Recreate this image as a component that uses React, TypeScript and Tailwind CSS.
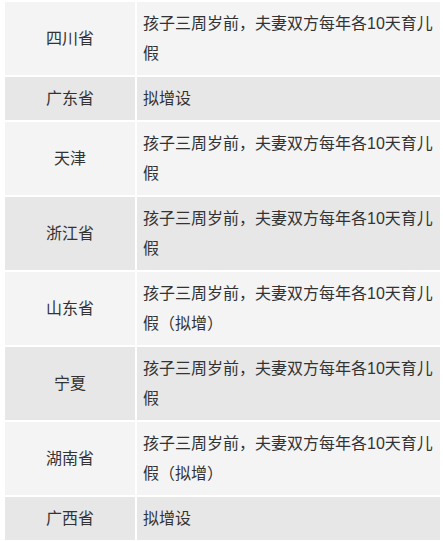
import React from "react";

const rows: { p: string; d: string }[] = [
  { p: "四川省", d: "孩子三周岁前，夫妻双方每年各10天育儿假" },
  { p: "广东省", d: "拟增设" },
  { p: "天津", d: "孩子三周岁前，夫妻双方每年各10天育儿假" },
  { p: "浙江省", d: "孩子三周岁前，夫妻双方每年各10天育儿假" },
  { p: "山东省", d: "孩子三周岁前，夫妻双方每年各10天育儿假（拟增）" },
  { p: "宁夏", d: "孩子三周岁前，夫妻双方每年各10天育儿假" },
  { p: "湖南省", d: "孩子三周岁前，夫妻双方每年各10天育儿假（拟增）" },
  { p: "广西省", d: "拟增设" },
];

export default function App() {
  return (
    <div
      className="w-[443px] h-[541px] overflow-hidden bg-white pl-[5px] pt-[2px] text-[16px] leading-[30px] text-[#333]"
      style={{ fontFamily: '"Liberation Sans", "Noto Sans CJK SC", sans-serif' }}
    >
      <div className="grid grid-cols-[130px_303px] gap-[2px]">
        {rows.map((r, i) => {
          const bg = i % 2 === 0 ? "bg-[#f4f4f4]" : "bg-[#e7e7e7]";
          return (
            <React.Fragment key={i}>
              <div className={`${bg} flex items-center justify-center py-[6.5px] px-[6px]`}>{r.p}</div>
              <div className={`${bg} py-[6.5px] px-[6px]`}>{r.d}</div>
            </React.Fragment>
          );
        })}
      </div>
    </div>
  );
}
